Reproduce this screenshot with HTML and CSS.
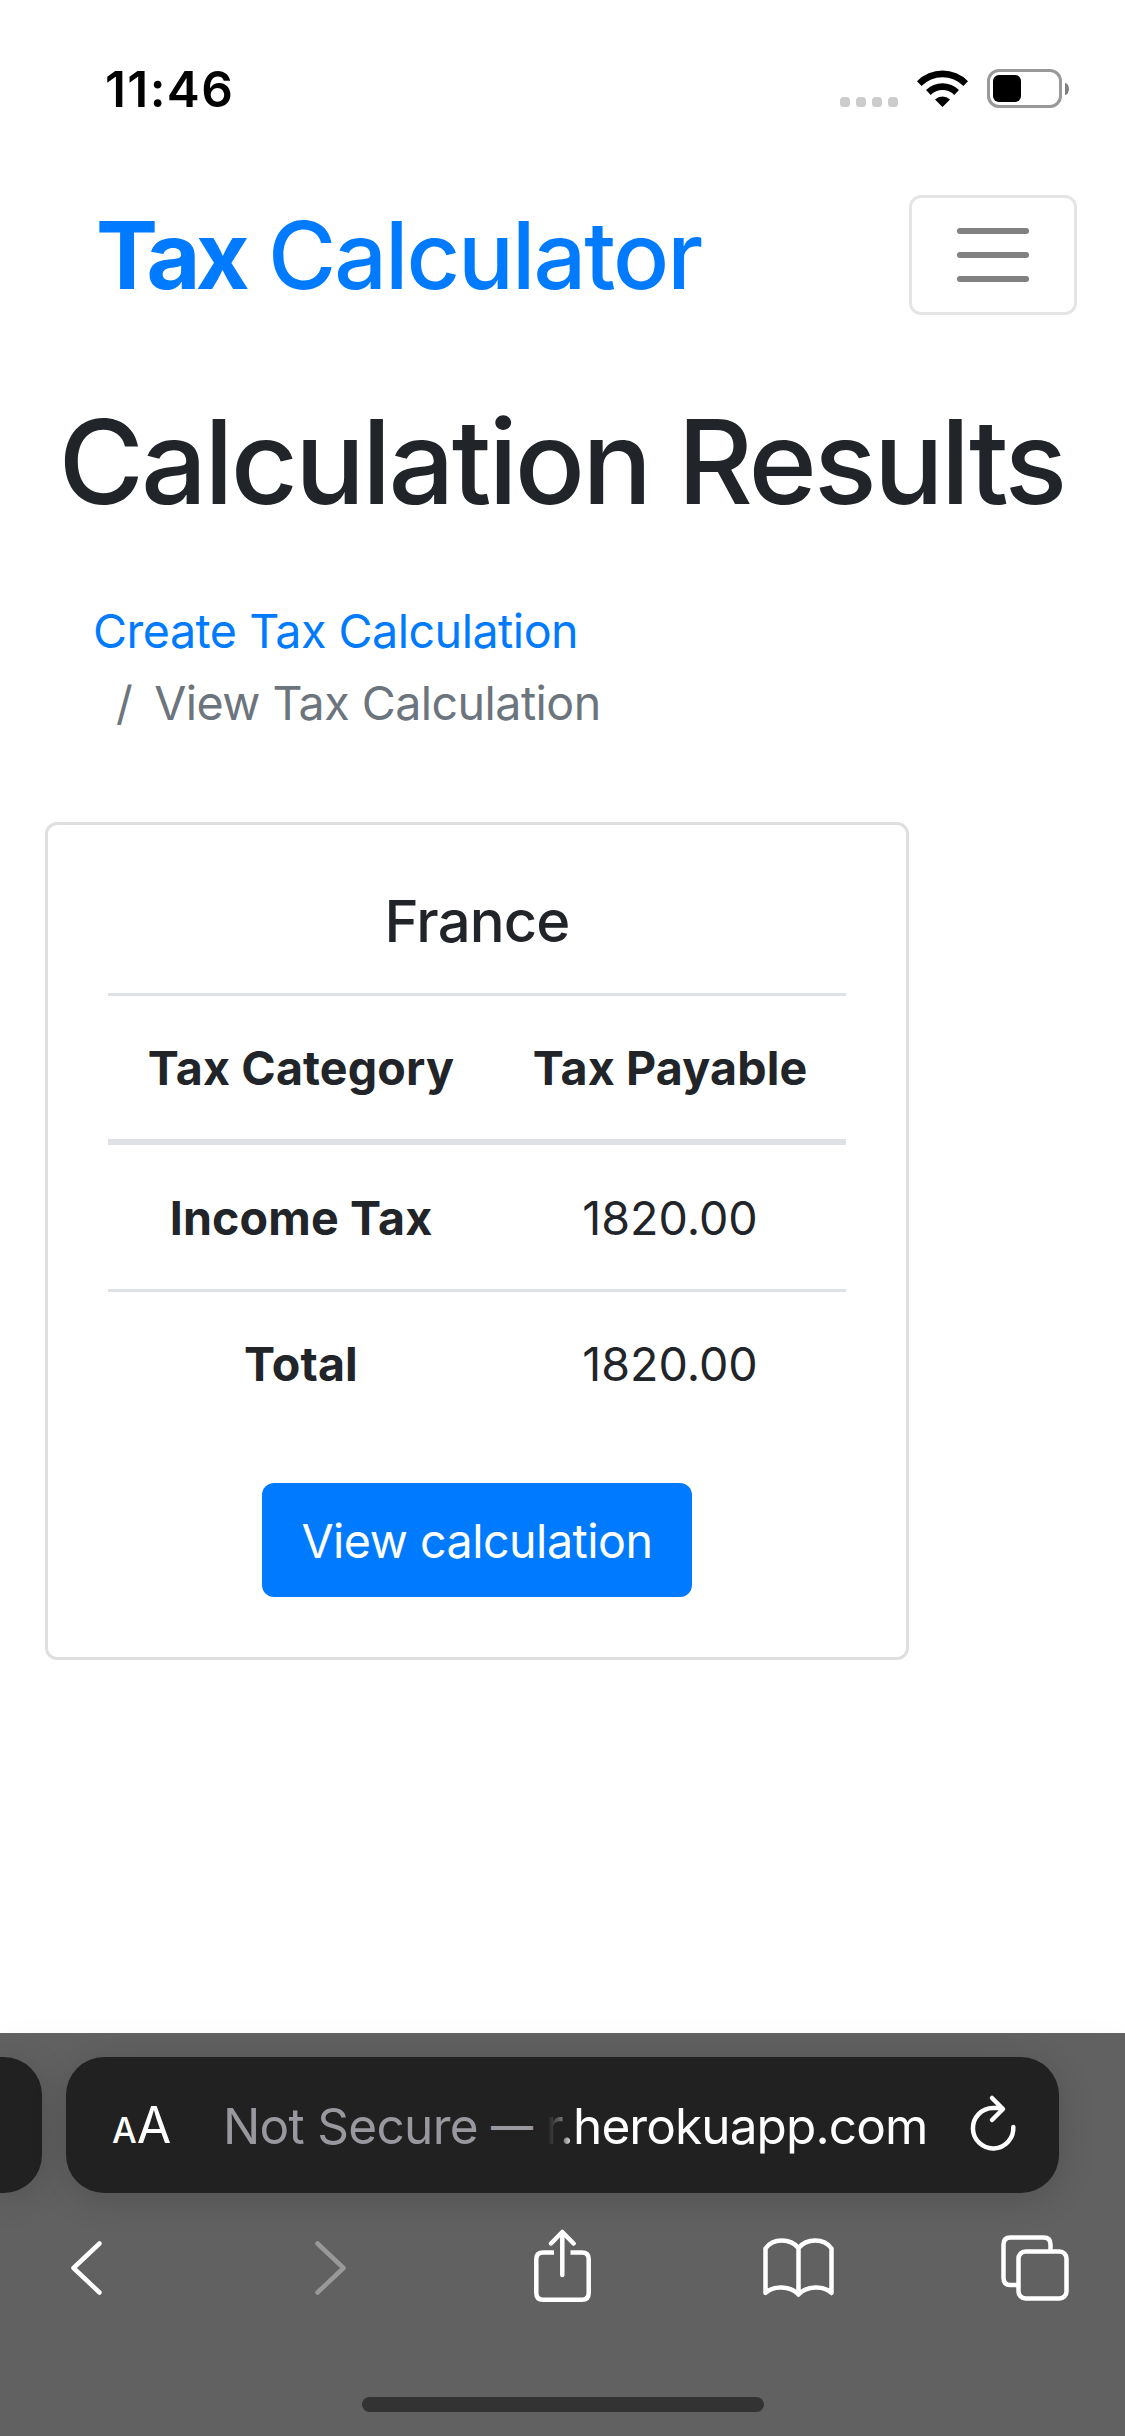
FILE: index.html
```html
<!DOCTYPE html>
<html lang="en">
<head>
<meta charset="utf-8">
<title>Tax Calculator</title>
<link rel="stylesheet" href="styles.css">
</head>
<body>
<div class="screen">
  <header class="status">
    <span class="time">11:46</span>
    <div class="indicators">
      <div class="signal"><i></i><i></i><i></i><i></i></div>
      <svg class="wifi" viewBox="0 0 51 37" width="51" height="37"><path d="M0 11.2A36 36 0 0 1 51 11.2L46.4 16A29.5 29.5 0 0 0 4.6 16ZM9 20A23.5 23.5 0 0 1 42 20L37.3 25A16.6 16.6 0 0 0 13.700 25ZM18 29.500A11 11 0 0 1 33 29.500L25.500 37Z"/></svg>
      <div class="battery"><div class="battery-body"><div class="battery-level"></div></div><div class="battery-cap"></div></div>
    </div>
  </header>

  <nav class="navbar">
    <a class="brand"><b>Tax</b><span class="brand-rest">Calculator</span></a>
    <button class="toggler" aria-label="Menu"><i></i><i></i><i></i></button>
  </nav>

  <main class="content">
    <h1 class="title">Calculation Results</h1>
    <ol class="crumbs">
      <li class="crumb"><a>Create Tax Calculation</a></li>
      <li class="crumb crumb-current"><span>/</span><span>View Tax Calculation</span></li>
    </ol>
    <section class="card">
      <h2 class="country">France</h2>
      <table class="taxes">
        <colgroup><col class="col-category"><col class="col-payable"></colgroup>
        <thead><tr><th>Tax Category</th><th>Tax Payable</th></tr></thead>
        <tbody>
          <tr><th>Income Tax</th><td>1820.00</td></tr>
          <tr class="total"><th>Total</th><td>1820.00</td></tr>
        </tbody>
      </table>
      <button class="view">View calculation</button>
    </section>
  </main>

  <footer class="browser">
    <div class="tabs">
      <div class="tab-prev"></div>
      <div class="address">
        <span class="reader"><span class="reader-s">A</span><span class="reader-l">A</span></span>
        <span class="insecure">Not Secure</span>
        <span class="dash">—</span>
        <span class="host"><span class="host-fade">r.</span><span class="host-name">herokuapp.com</span></span>
        <svg class="reload" viewBox="0 0 46 56" width="46" height="56"><path d="M42.300 30A20.200 20.200 0 1 1 22 11H31M21 1L32 12L21 23"/></svg>
      </div>
    </div>
    <div class="tools">
      <svg class="tool tool-low" viewBox="0 0 31 54" width="31" height="54"><path d="M28.500 2.500L2.500 27L28.500 51.500"/></svg>
      <svg class="tool tool-low tool-off" viewBox="0 0 31 54" width="31" height="54"><path d="M2.500 2.500L28.500 27L2.500 51.500"/></svg>
      <svg class="tool" viewBox="0 0 57 74" width="57" height="74"><path class="butt" d="M20 23.500H9Q2.300 23.500 2.300 30V64Q2.300 70.700 9 70.700H48Q54.700 70.700 54.700 64V30Q54.700 23.500 48 23.500H36.500"/><path d="M28.300 46V3.500M17 14.500L28.300 3L39.600 14.500"/></svg>
      <svg class="tool tool-low" viewBox="0 0 71 60" width="71" height="60"><path d="M35.500 56.500V10C27 0 10 0 2.500 10.500V55C10 47.500 27 47.500 35.500 56.500C44 47.500 61 47.500 68.500 55V10.500C61 0 44 0 35.500 10"/></svg>
      <svg class="tool tool-low" viewBox="0 0 68 66" width="68" height="66"><rect x="17.500" y="16.500" width="48" height="47" rx="7"/><path class="butt" d="M16 50H9.500Q2.500 50 2.500 43V9.500Q2.500 2.500 9.500 2.500H42.500Q49.500 2.500 49.500 9.500V15"/></svg>
    </div>
    <div class="home"></div>
  </footer>
</div>
</body>
</html>
```
FILE: styles.css
```css
* { box-sizing: border-box; }
body { margin: 0; background: #fff; }
.screen {
  width: 1125px;
  height: 2436px;
  display: flex;
  flex-direction: column;
  overflow: hidden;
  font-family: Inter, "Liberation Sans", sans-serif;
  color: #212529;
  white-space: nowrap;
}
button { font: inherit; background: none; }

/* status bar */
.status {
  flex: none;
  height: 141px;
  padding: 69px 56px 0 105px;
  display: flex;
  justify-content: space-between;
  align-items: flex-start;
}
.time { font-size: 49.500px; line-height: 40px; font-weight: 600; letter-spacing: 1.400px; color: #000; }
.indicators { display: flex; align-items: flex-start; }
.signal { display: flex; gap: 6px; padding-top: 28px; }
.signal i { width: 10px; height: 10px; border-radius: 3.500px; background: #ccc; }
.wifi { margin: 1px 19px 0 19px; }
.battery { display: flex; align-items: center; gap: 3px; }
.battery-body { width: 75px; height: 39px; padding: 3px; border: 3px solid #999; border-radius: 12px; }
.battery-level { width: 28px; height: 27px; border-radius: 6px; background: #000; }
.battery-cap { width: 4px; height: 12px; border-radius: 0 4px 4px 0 / 0 6px 6px 0; background: #808080; }

/* page header */
.navbar {
  flex: none;
  height: 228px;
  padding: 54px 48px 0 96px;
  display: flex;
  justify-content: space-between;
  align-items: flex-start;
}
.brand { display: flex; font-size: 93px; line-height: 120px; color: #007bff; }
.brand b { width: 172px; font-weight: 700; letter-spacing: -4.800px; }
.brand-rest { font-weight: 500; letter-spacing: -2px; }
.toggler {
  width: 168px;
  height: 120px;
  padding: 0;
  border: 3px solid #e5e5e5;
  border-radius: 12px;
  display: flex;
  flex-direction: column;
  align-items: center;
  justify-content: center;
  gap: 18px;
}
.toggler i { width: 72px; height: 6px; border-radius: 3px; background: #808080; }

/* results */
.content { flex: 1; padding: 21px 45px 0; }
.title { margin: 0; padding-right: 2px; font-size: 116.500px; line-height: 144px; font-weight: 500; letter-spacing: -2.950px; text-align: center; }
.crumbs { list-style: none; margin: 0; padding: 61px 0 0 48px; }
.crumb { height: 72px; font-size: 46.600px; line-height: 72px; letter-spacing: -.5px; color: #007bff; display: flex; }
.crumb-current { padding-left: 23px; gap: 22px; letter-spacing: -.55px; color: #6c757d; }
.card {
  width: 864px;
  height: 838px;
  margin-top: 83px;
  padding: 60px;
  border: 3px solid #dfdfdf;
  border-radius: 12px;
  display: flex;
  flex-direction: column;
  align-items: center;
}
.country { margin: 0; padding-bottom: 36px; font-size: 58px; line-height: 72px; font-weight: 500; letter-spacing: -.9px; }
.taxes { width: 738px; table-layout: fixed; border-collapse: separate; border-spacing: 0; font-size: 46.600px; line-height: 72px; }
.col-category { width: 386px; }
.col-payable { width: 352px; }
.taxes th, .taxes td { padding: 2px 0 0; text-align: center; height: 144px; }
.taxes th { font-weight: 700; letter-spacing: .15px; }
.taxes thead th { height: 152px; padding: 0; border-top: 3px solid #dee2e6; border-bottom: 6px solid #dee2e6; }
.taxes .total th, .taxes .total td { height: 146px; padding: 0; border-top: 3px solid #dee2e6; }
.view {
  width: 430px;
  height: 114px;
  margin-top: 48px;
  padding: 2px 0 0;
  border: 0;
  border-radius: 12px;
  background: #007bff;
  color: #fff;
  font-size: 46.600px;
  letter-spacing: -.5px;
}

/* browser chrome */
.browser { flex: none; height: 403px; padding-top: 24px; background: #616161; box-shadow: 0 -4px 24px rgba(0,0,0,.02); }
.tabs { display: flex; gap: 24px; height: 136px; }
.tab-prev { width: 42px; border-radius: 0 38px 38px 0; background: #212121; box-shadow: 0 6px 36px rgba(0,0,0,.16); }
.address {
  width: 993px;
  padding: 2px 0 0 46px;
  border-radius: 38px;
  background: #212121;
  box-shadow: 0 6px 36px rgba(0,0,0,.16);
  display: flex;
  align-items: center;
  font-size: 49.500px;
  line-height: 60px;
}
.reader { width: 111px; padding-top: 3px; display: flex; align-items: baseline; color: #fff; }
.reader-s { font-size: 35px; font-weight: 500; }
.reader-l { font-size: 50px; }
.insecure { width: 267px; letter-spacing: -.7px; color: #99989f; }
.dash { width: 55px; padding-left: 1px; font-size: 42px; font-weight: 500; color: #99989f; }
.host { width: 426px; letter-spacing: -.9px; color: #fff; }
.host-fade { background: linear-gradient(90deg, #212121 10%, #777 65%, #fff); -webkit-background-clip: text; background-clip: text; color: transparent; }
.reload { margin-bottom: 2px; overflow: visible; }
.reload, .tool { fill: none; stroke: #fff; stroke-width: 4.500; stroke-linecap: round; stroke-linejoin: round; }
.tools {
  height: 74px;
  margin-top: 36px;
  padding-left: 71px;
  display: grid;
  grid-template-columns: 244px 219px 229px 238px 68px;
  align-items: center;
}
.tool-low { margin-top: 4px; }
.tool .butt { stroke-linecap: butt; }
.tool-off { stroke: #999; }
.home { width: 402px; height: 15px; margin: 94px auto 0; border-radius: 8px; background: #333; }
```
